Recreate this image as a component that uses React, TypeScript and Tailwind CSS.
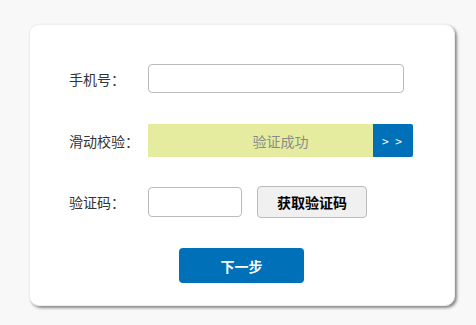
const font = { fontFamily: '"Microsoft YaHei", "Noto Sans CJK SC", sans-serif' };

export default function App() {
  return (
    <div className="min-h-[325px] w-full bg-[#f8f8f8] pt-6 pl-[29px]" style={font}>
      <div className="w-[426px] h-[282px] bg-white rounded-[10px] border border-[#eeeeee] shadow-[2px_2px_3px_rgba(0,0,0,0.45)] pl-[39px] pt-[39px] text-sm text-[#333]">
        <div className="flex items-center h-[29px]">
          <div className="w-[79px]">手机号：</div>
          <input className="w-[256px] h-[29px] border border-[#bbbbbb] rounded-[4px] outline-none px-2" />
        </div>

        <div className="flex items-center h-[33px] mt-[31px]">
          <div className="w-[79px]">滑动校验：</div>
          <div className="relative flex w-[265px] h-[33px]">
            <div className="flex-1 bg-[#e5ec9f]" />
            <div className="w-[40px] bg-[#0071b9] rounded-r-[2px] flex items-center justify-center text-white text-xs tracking-[2px]">
              &gt; &gt;
            </div>
            <div className="absolute inset-0 flex items-center justify-center text-[#8a8a8a]">
              验证成功
            </div>
          </div>
        </div>

        <div className="flex items-center h-[32px] mt-[29px]">
          <div className="w-[79px]">验证码：</div>
          <input className="w-[94px] h-[30px] border border-[#bbbbbb] rounded-[4px] outline-none px-2" />
          <button className="ml-[15px] w-[110px] h-[32px] bg-[#f0f0f0] border border-[#bbbbbb] rounded-[4px] font-bold text-black">
            获取验证码
          </button>
        </div>

        <div className="flex mt-[30px] pl-[110px]">
          <button className="w-[125px] h-[35px] bg-[#0071b9] rounded-[4px] text-white font-bold">
            下一步
          </button>
        </div>
      </div>
    </div>
  );
}
